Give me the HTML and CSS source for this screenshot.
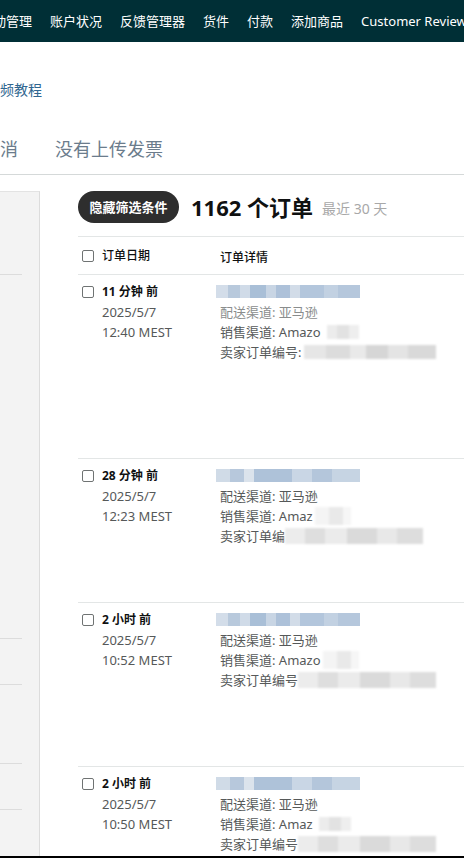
FILE: index.html
```html
<!DOCTYPE html>
<html lang="zh-CN">
<head>
<meta charset="utf-8">
<title>管理订单</title>
<link rel="stylesheet" href="styles.css">
</head>
<body>
<nav class="topnav">
  <span class="nav-item nav-first">活动管理</span>
  <span class="nav-item">账户状况</span>
  <span class="nav-item">反馈管理器</span>
  <span class="nav-item">货件</span>
  <span class="nav-item">付款</span>
  <span class="nav-item">添加商品</span>
  <span class="nav-item">Customer Reviews</span>
</nav>
<div class="help"><a class="help-link">视频教程</a></div>
<div class="tabs">
  <span class="tab tab-first">已取消</span>
  <span class="tab">没有上传发票</span>
</div>
<div class="content">
  <aside class="sidebar">
    <div class="sb-block sb-1"></div>
    <div class="sb-block sb-2"></div>
    <div class="sb-block sb-3"></div>
    <div class="sb-block sb-4"></div>
    <div class="sb-block sb-5"></div>
  </aside>
  <main class="main">
    <div class="toolbar">
      <button class="pill">隐藏筛选条件</button>
      <h1 class="count">1162 个订单</h1>
      <span class="range">最近 30 天</span>
    </div>
    <div class="table">
      <div class="thead">
        <div class="col-date"><span class="cb"></span><span class="th">订单日期</span></div>
        <div class="col-detail"><span class="th">订单详情</span></div>
      </div>

      <div class="row row-1">
        <div class="col-date"><span class="cb"></span>
          <div class="date">
            <div class="ago">11 分钟 前</div>
            <div class="dline">2025/5/7</div>
            <div class="dline">12:40 MEST</div>
          </div>
        </div>
        <div class="col-detail">
          <div class="line"><span class="redact-blue"></span></div>
          <div class="line washed">配送渠道: 亚马逊</div>
          <div class="line">销售渠道: Amazo<span class="redact redact-sm"></span></div>
          <div class="line">卖家订单编号:<span class="redact redact-lg"></span></div>
        </div>
      </div>

      <div class="row row-2">
        <div class="col-date"><span class="cb"></span>
          <div class="date">
            <div class="ago">28 分钟 前</div>
            <div class="dline">2025/5/7</div>
            <div class="dline">12:23 MEST</div>
          </div>
        </div>
        <div class="col-detail">
          <div class="line"><span class="redact-blue alt"></span></div>
          <div class="line">配送渠道: 亚马逊</div>
          <div class="line">销售渠道: Amaz<span class="redact redact-white"></span></div>
          <div class="line">卖家订单编<span class="redact redact-xl"></span></div>
        </div>
      </div>

      <div class="row row-3">
        <div class="col-date"><span class="cb"></span>
          <div class="date">
            <div class="ago">2 小时 前</div>
            <div class="dline">2025/5/7</div>
            <div class="dline">10:52 MEST</div>
          </div>
        </div>
        <div class="col-detail">
          <div class="line"><span class="redact-blue"></span></div>
          <div class="line">配送渠道: 亚马逊</div>
          <div class="line">销售渠道: Amazo<span class="redact redact-white"></span></div>
          <div class="line">卖家订单编号<span class="redact redact-xl"></span></div>
        </div>
      </div>

      <div class="row row-4">
        <div class="col-date"><span class="cb"></span>
          <div class="date">
            <div class="ago">2 小时 前</div>
            <div class="dline">2025/5/7</div>
            <div class="dline">10:50 MEST</div>
          </div>
        </div>
        <div class="col-detail">
          <div class="line"><span class="redact-blue alt"></span></div>
          <div class="line">配送渠道: 亚马逊</div>
          <div class="line">销售渠道: Amaz<span class="redact redact-sm"></span></div>
          <div class="line">卖家订单编号<span class="redact redact-xl"></span></div>
        </div>
      </div>
    </div>
  </main>
</div>
</body>
</html>
```

FILE: styles.css
```css
* { box-sizing: border-box; margin: 0; padding: 0; }

html { background: #000; }

body {
  width: 464px;
  height: 856px;
  overflow: hidden;
  background: #fff;
  font-family: "Noto Sans", "Noto Sans CJK SC", sans-serif;
  color: #0f1111;
}

/* top navigation */
.topnav {
  height: 42px;
  background: #002f36;
  display: flex;
  align-items: center;
  gap: 18px;
  white-space: nowrap;
  overflow: hidden;
}
.nav-item {
  flex: none;
  color: #fff;
  font-size: 13px;
  line-height: 18px;
  font-weight: 400;
}
.nav-first { margin-left: -20px; }

/* help link */
.help {
  margin-top: 36px;
  height: 20px;
  white-space: nowrap;
  overflow: hidden;
}
.help-link {
  display: inline-block;
  margin-left: -14px;
  font-size: 14px;
  line-height: 20px;
  color: #2f6690;
}

/* tabs */
.tabs {
  margin-top: 38px;
  display: flex;
  gap: 37px;
  padding-bottom: 12px;
  border-bottom: 1px solid #d5d9d9;
  white-space: nowrap;
  overflow: hidden;
}
.tab {
  flex: none;
  font-size: 18px;
  line-height: 26px;
  color: #6b7c8c;
}
.tab-first { margin-left: -36px; }

/* content */
.content {
  display: flex;
  margin-top: 16px;
  height: 682px;
}

.sidebar {
  flex: none;
  width: 40px;
  background: #f3f3f3;
  border-top: 1px solid #e3e3e3;
  border-right: 1px solid #dcdcdc;
  display: flex;
  flex-direction: column;
}
.sb-block {
  flex: none;
  width: 22px;
  border-bottom: 1px solid #dcdcdc;
}
.sb-1 { height: 83px; }
.sb-2 { height: 364px; }
.sb-3 { height: 46px; }
.sb-4 { height: 79px; }
.sb-5 { height: 46px; }

.main {
  flex: 1;
  min-width: 0;
  padding-left: 38px;
  overflow: hidden;
}

.toolbar {
  height: 32px;
  display: flex;
  align-items: center;
  white-space: nowrap;
}
.pill {
  flex: none;
  height: 32px;
  width: 101px;
  border: none;
  border-radius: 16px;
  background: #2e2e2e;
  color: #fff;
  font-family: "Noto Sans CJK SC", sans-serif;
  font-size: 13px;
  font-weight: 700;
  line-height: 18px;
}
.count {
  margin-left: 12px;
  font-size: 22px;
  line-height: 30px;
  font-weight: 700;
  color: #0f1111;
}
.range {
  margin-left: 9px;
  margin-top: 3px;
  font-size: 14px;
  line-height: 20px;
  color: #a8a8a8;
}

.table {
  margin-top: 13px;
  border-top: 1px solid #e3e6e6;
}

.thead {
  height: 38px;
  display: flex;
  align-items: center;
  padding-left: 4px;
  border-bottom: 1px solid #e3e6e6;
}
.th {
  font-size: 12px;
  line-height: 18px;
  font-weight: 500;
  color: #0f1111;
}

.col-date {
  flex: none;
  width: 138px;
  display: flex;
  align-items: flex-start;
  gap: 8px;
}
.thead .col-date { align-items: center; }

.col-detail {
  flex: 1;
  min-width: 0;
}

.cb {
  flex: none;
  width: 12px;
  height: 12px;
  border: 1px solid #6f7373;
  border-radius: 2px;
  background: #fff;
}
.row .cb { margin-top: 4px; }

.row {
  display: flex;
  padding: 7px 0 0 4px;
  border-bottom: 1px solid #e3e6e6;
}
.row-1 { height: 184px; }
.row-2 { height: 144px; }
.row-3 { height: 164px; }
.row-4 { height: 160px; }

.ago {
  font-size: 12px;
  line-height: 20px;
  font-weight: 700;
  color: #0f1111;
}
.dline {
  font-size: 13px;
  line-height: 20px;
  color: #565959;
}

.line {
  font-size: 13px;
  line-height: 20px;
  height: 20px;
  color: #565959;
  white-space: nowrap;
  display: flex;
  align-items: center;
}
.washed { color: #8a8d8d; }

.redact-blue {
  display: block;
  width: 144px;
  height: 13px;
  margin-left: -4px;
  margin-top: -1px;
  filter: blur(0.6px);
  background: linear-gradient(90deg,
    #d3dde9 0 12px, #b8c9dc 12px 24px, #d0dbe8 24px 34px,
    #a9bfd7 34px 50px, #c8d5e4 50px 60px, #adc1d9 60px 74px,
    #d2dce8 74px 84px, #b3c6dc 84px 108px, #c2d1e2 108px 122px,
    #b5c7dc 122px 144px);
}
.redact-blue.alt {
  background: linear-gradient(90deg,
    #d0dbe7 0 14px, #b7c8dc 14px 28px, #dbe3ec 28px 38px,
    #aec2d9 38px 76px, #c9d6e5 76px 96px, #b4c6db 96px 116px,
    #c6d4e3 116px 144px);
}

.redact {
  display: inline-block;
  height: 14px;
  filter: blur(1px);
}
.redact-sm {
  width: 32px;
  margin-left: 6px;
  background: linear-gradient(90deg, #ececec 0 10px, #e2e2e2 10px 22px, #eeeeee 22px 32px);
}
.redact-white {
  width: 36px;
  margin-left: 2px;
  height: 18px;
  background: linear-gradient(90deg, #f4f4f4 0 14px, #e9e9e9 14px 28px, #f6f6f6 28px 36px);
}
.redact-lg {
  width: 132px;
  margin-left: 3px;
  background: linear-gradient(90deg,
    #e6e6e6 0 22px, #dcdcdc 22px 46px, #e9e9e9 46px 62px,
    #d6d6d6 62px 84px, #e4e4e4 84px 104px, #d9d9d9 104px 132px);
}
.redact-xl {
  width: 138px;
  height: 16px;
  background: linear-gradient(90deg,
    #ececec 0 20px, #dedede 20px 40px, #ebebeb 40px 62px,
    #dadada 62px 92px, #e8e8e8 92px 112px, #dddddd 112px 138px);
}
```
